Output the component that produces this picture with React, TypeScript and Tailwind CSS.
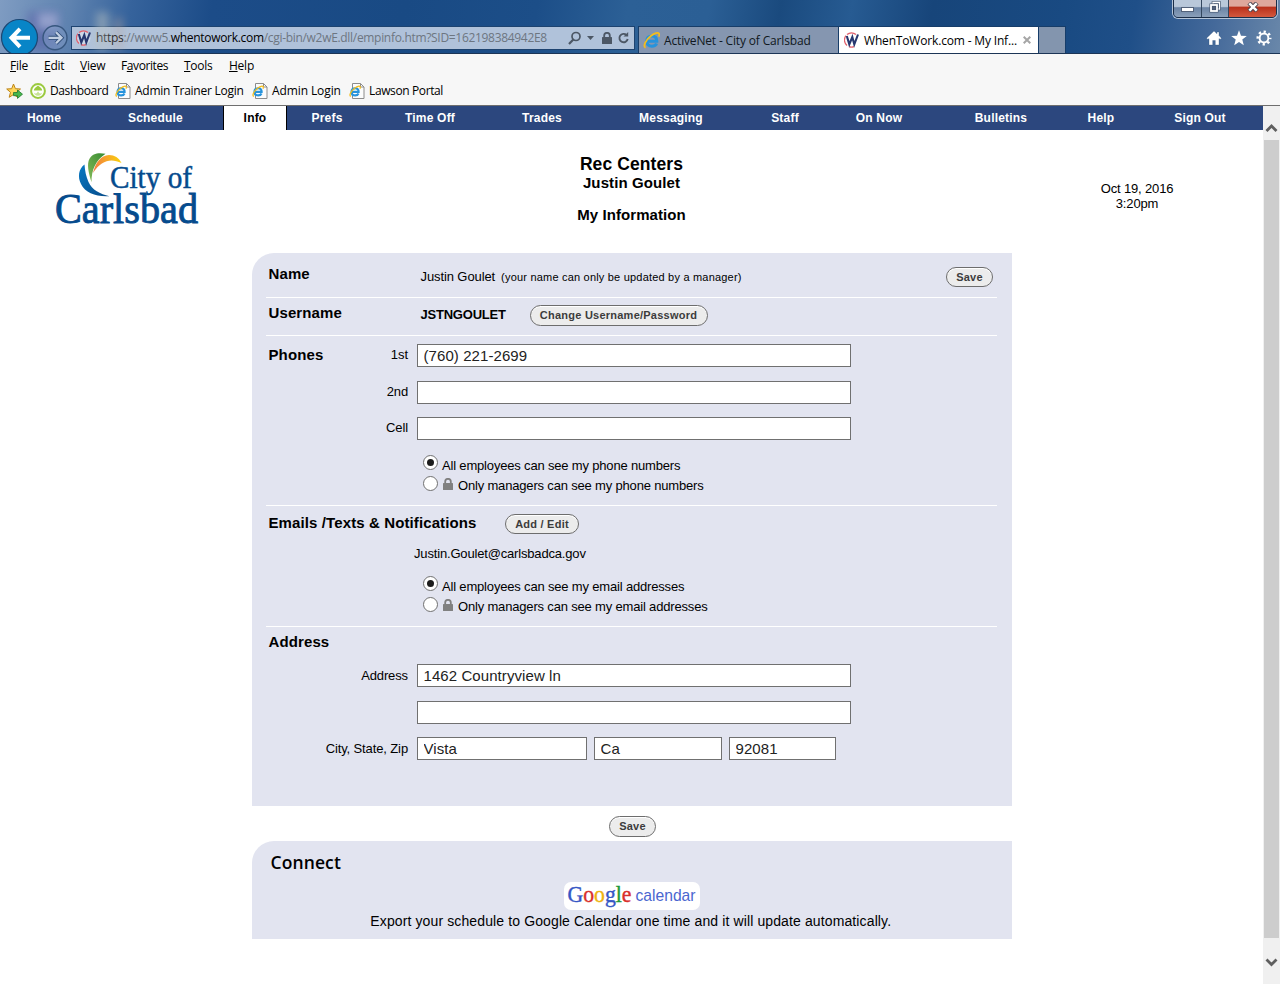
import React from 'react';

const UI = 'font-["Open_Sans","Noto_Sans",sans-serif]';

function WLogo() {
  return (
    <svg width="16" height="16" viewBox="0 0 16 16" className="shrink-0">
      <circle cx="7.500" cy="8" r="7" fill="#fff" fillOpacity=".35" />
      <path d="M12 2.600A7 7 0 003 2.600M2 3.700A7 7 0 003 13.500M5 14.600A7 7 0 0010 14.600" fill="none" stroke="#e2606c" strokeWidth="1.300" />
      <path d="M2.800 4l2.500 8.300L8.300 5l2 7.300L14 2.500" fill="none" stroke="#26376f" strokeWidth="2.100" />
    </svg>
  );
}

function IeGlyph() {
  return (
    <g fill="none">
      <path d="M3.400 8.700h9.600c.2-3.200-1.700-5-4.600-5-3 0-5 2.100-5 5 0 2.900 2 4.700 5 4.700 2.100 0 3.700-.9 4.400-2.600" stroke="#2793dc" strokeWidth="2.900" />
      <path d="M2.400 14.800C-.4 13.400 2.800 7.300 7.600 3.600 10.800 1.100 14.200.1 15.100 1.600c.4.700.2 1.700-.3 2.700" stroke="#f3bd1c" strokeWidth="1.700" />
    </g>
  );
}

function IeIcon() {
  return (
    <svg width="17" height="17" viewBox="0 0 16 16" className="shrink-0">
      <IeGlyph />
    </svg>
  );
}

function IePage() {
  return (
    <svg width="16" height="17" viewBox="0 0 16 17" className="shrink-0">
      <path d="M3.500 .5h8l3.500 3.500v11.500h-11.500z" fill="#fcfcfc" stroke="#8c8c8c" />
      <path d="M11.500 .5V4H15" fill="none" stroke="#8c8c8c" />
      <g transform="translate(0 2.500) scale(.74)">
        <IeGlyph />
      </g>
    </svg>
  );
}

function Lock({ className, width, height }: { className: string; width: number; height: number }) {
  return (
    <svg width={width} height={height} viewBox="0 0 10 12" className={className}>
      <path d="M2.200 6V3.600a2.800 2.800 0 015.600 0V6" fill="none" stroke="currentColor" strokeWidth="1.800" />
      <rect x="0" y="5" width="10" height="7" rx=".5" fill="currentColor" />
    </svg>
  );
}

function Chrome() {
  return (
    <header className="relative h-[53px] shrink-0 overflow-hidden bg-[linear-gradient(100deg,#7f9cc2_0px,#5f83b0_70px,#36639c_130px,#1c4c88_210px,#194a84_400px,#1c4e88_530px,#2c6096_620px,#2b5f95_700px,#1a4a7e_770px,#275b92_840px,#17457a_920px,#194a82_1050px,#1f4f88_1120px,#44699a_1200px,#6f8cac_1280px)]">
      <div className="absolute left-[28px] top-[12px] h-[38px] w-[30px] bg-[#5961a8] opacity-60 blur-[5px]" />
      <div className="absolute left-[38px] top-[13px] h-[16px] w-[20px] bg-[#c8d0ea] opacity-50 blur-[4px]" />
      <div className="absolute left-[96px] top-[12px] h-[38px] w-[13px] bg-[#b9c1c0] opacity-50 blur-[4px]" />
      <div className="absolute left-[114px] top-[18px] h-[32px] w-[9px] bg-[#b8a6a0] opacity-40 blur-[4px]" />

      <svg width="72" height="36" viewBox="0 0 72 36" className="absolute left-0 top-[17px]">
        <circle cx="19.500" cy="20.500" r="18" fill="#0885c7" stroke="#1d4773" strokeWidth="1.200" />
        <path d="M30 20.800H11.500M20 11.800l-8.500 9 8.500 9" fill="none" stroke="#fff" strokeWidth="4" />
        <circle cx="55" cy="20.800" r="12" fill="#7f9cc6" fillOpacity=".5" stroke="#37577f" strokeWidth="1.400" />
        <path d="M48.500 20.800H61M56 15.300l5.500 5.500-5.500 5.500" fill="none" stroke="#304f7a" strokeWidth="4" />
        <path d="M48.500 20.800H61M56 15.300l5.500 5.500-5.500 5.500" fill="none" stroke="#c0cee2" strokeWidth="2.300" />
      </svg>

      <div className="flex h-[53px] items-start pl-[71px] pt-[26px]">
        <div className={`flex h-[24px] w-[564px] items-center border border-[#1d4370] bg-[#b0c2da] pl-[4px] ${UI} text-[12px]`}>
          <WLogo />
          <span className="ml-[4px] w-[453px] shrink-0 whitespace-nowrap leading-6 tracking-[-0.31px] text-[#6d7681]">
            <span className="text-black">https</span>://www5.<span className="text-black">whentowork.com</span>/cgi-bin/w2wE.dll/empinfo.htm?SID=162198384942E8
          </span>
          <div className="ml-[18px] flex items-center text-[#4c5765]">
            <svg width="15" height="15" viewBox="0 0 15 15">
              <circle cx="9" cy="5.500" r="4" fill="none" stroke="currentColor" strokeWidth="1.700" />
              <path d="M6.300 8.500L2 13" stroke="currentColor" strokeWidth="2.200" />
            </svg>
            <svg width="7" height="4" viewBox="0 0 7 4" className="ml-[5px]"><path d="M0 0h7L3.500 4z" fill="currentColor" /></svg>
            <Lock width={10} height={12} className="ml-[8px]" />
            <svg width="13" height="14" viewBox="0 0 13 14" className="ml-[5px]">
              <path d="M9.500 4A4.200 4.200 0 1010.700 8" fill="none" stroke="currentColor" strokeWidth="1.900" />
              <path d="M6.500 5.500h4.700V1z" fill="currentColor" />
            </svg>
          </div>
        </div>
        <div className={`ml-[3px] flex h-[27px] w-[201px] items-center border-x border-t border-[#173d69] bg-[#8596b0] pl-[4px] ${UI} text-[12px] text-[#101820]`}>
          <IeIcon />
          <span className="ml-[4px] whitespace-nowrap pt-[2px] leading-5 tracking-[-0.16px]">ActiveNet - City of Carlsbad</span>
        </div>
        <div className={`flex h-[27px] w-[200px] items-center border-r border-t border-[#173d69] bg-white pl-[5px] ${UI} text-[12px] text-black`}>
          <WLogo />
          <span className="ml-[4px] w-[155px] shrink-0 whitespace-nowrap pt-[2px] leading-5 tracking-[-0.17px]">WhenToWork.com - My Inf...</span>
          <svg width="8" height="8" viewBox="0 0 8 8" className="ml-[4px]"><path d="M.7.7l6.600 6.600M7.300.7L.7 7.300" stroke="#a6a6a6" strokeWidth="2" /></svg>
        </div>
        <div className="h-[27px] w-[27px] border-r border-t border-[#173d69] bg-[#8395ae]" />
        <div className="ml-auto mr-[8px] mt-[4px] flex gap-[9px] text-white">
          <svg width="16" height="16" viewBox="0 0 16 16"><path d="M8 1L.5 8.200l1.500 1.300 1-.9V15h3.700v-4.500h2.600V15H13V8.600l1 .9 1.500-1.300L13 5.600V2h-2v1.800z" fill="currentColor" stroke="#274b77" strokeWidth=".3" /></svg>
          <svg width="16" height="16" viewBox="0 0 16 16"><path d="M8 .3l2 5.400 5.800.2-4.500 3.600 1.500 5.700L8 12l-4.800 3.200 1.500-5.700L.2 5.900 6 5.700z" fill="currentColor" /></svg>
          <svg width="16" height="16" viewBox="0 0 16 16">
            <circle cx="8" cy="8" r="4.400" fill="none" stroke="currentColor" strokeWidth="2" />
            <circle cx="8" cy="8" r="6.300" fill="none" stroke="currentColor" strokeWidth="2.400" strokeDasharray="2.300 2.648" strokeDashoffset="1.150" />
          </svg>
        </div>
      </div>

      <div className="absolute right-[3px] top-[-6px] flex h-[24px] w-[104px] overflow-hidden rounded-b-[5px] border border-[#1b2e48] shadow-[0_0_0_1px_#b4c4d8]">
        <div className="flex w-[28px] items-end justify-center border-r border-[#33475f] bg-[linear-gradient(#b9c8da_52%,#6b84a5_58%,#8ba0ba)] pb-[5px]">
          <div className="h-[5px] w-[13px] border border-[#53627a] bg-white" />
        </div>
        <div className="flex w-[27px] items-end justify-center border-r border-[#33475f] bg-[linear-gradient(#b9c8da_52%,#6b84a5_58%,#8ba0ba)] pb-[4px]">
          <svg width="12" height="12" viewBox="0 0 12 12">
            <path d="M4 3V1.500h6.500V8H9" fill="none" stroke="#43536c" strokeWidth="2.600" />
            <path d="M4 3V1.500h6.500V8H9" fill="none" stroke="#fff" strokeWidth="1.300" />
            <rect x="2" y="4" width="6" height="6" fill="#53627a" stroke="#43536c" strokeWidth="3" />
            <rect x="2" y="4" width="6" height="6" fill="none" stroke="#fff" strokeWidth="1.800" />
          </svg>
        </div>
        <div className="flex flex-1 items-end justify-center bg-[linear-gradient(#dea79c_50%,#b9311c_56%,#d4583d)] pb-[5px]">
          <svg width="12" height="10" viewBox="0 0 12 10">
            <path d="M2 1l8 8M10 1L2 9" stroke="#4b4550" strokeWidth="4.400" />
            <path d="M2.300 1.300l7.400 7.400M9.700 1.300L2.300 8.700" stroke="#fff" strokeWidth="2.500" />
          </svg>
        </div>
      </div>
    </header>
  );
}

function Menus() {
  return (
    <div className={`h-[53px] shrink-0 border-b border-t border-b-[#6e6e6e] border-t-[#1c3556] bg-[#f7f7f7] ${UI} text-[12px] text-black`}>
      <div className="flex h-[24px] items-center pl-[10px] leading-5 tracking-[-0.25px]">
        <span className="w-[34px]"><u>F</u>ile</span>
        <span className="w-[36px]"><u>E</u>dit</span>
        <span className="w-[41px]"><u>V</u>iew</span>
        <span className="w-[63px] tracking-[-0.4px]">F<u>a</u>vorites</span>
        <span className="w-[45px]"><u>T</u>ools</span>
        <span><u>H</u>elp</span>
      </div>
      <div className="flex h-[26px] items-center whitespace-nowrap pl-[6px] leading-5">
        <svg width="17" height="16" viewBox="0 0 17 16">
          <path d="M7.500 1l1.900 4.700 5.100.3-4 3.300 1.300 5-4.300-2.800-4.300 2.800 1.300-5L.7 6l5-.3z" fill="#ffd75c" stroke="#bd8418" />
          <path d="M7.500 9.500h4V7l5 4.200-5 4.200v-2.700h-4z" fill="#47b74d" stroke="#23782e" strokeWidth=".8" />
        </svg>
        <svg width="16" height="16" viewBox="0 0 16 16" className="ml-[7px]">
          <circle cx="8" cy="8" r="6.900" fill="#fff" stroke="#9bca3f" strokeWidth="2" />
          <path d="M8 2.500C6 4 4 5.500 3.800 7.500h8.400C12 5.500 10 4 8 2.500z" fill="#9bca3f" />
          <path d="M3.800 8.500a1.700 1.700 0 003.700.2h1a1.700 1.700 0 003.700-.2c0 2.500-1.700 4.300-4.200 4.300s-4.200-1.800-4.200-4.300z" fill="#9bca3f" fillOpacity=".55" />
        </svg>
        <span className="ml-[4px] w-[65px] tracking-[-0.55px]"><span className="tracking-[-0.4px]">Dashboard</span></span>
        <IePage />
        <span className="ml-[4px] w-[117px] tracking-[-0.24px]">Admin Trainer Login</span>
        <IePage />
        <span className="ml-[4px] w-[77px] tracking-[-0.1px]">Admin Login</span>
        <IePage />
        <span className="ml-[4px] tracking-[-0.38px]">Lawson Portal</span>
      </div>
    </div>
  );
}

const NAV: [string, string][] = [
  ['Home', 'w-[88px]'],
  ['Schedule', 'w-[135px]'],
  ['Info', 'w-[64px] bg-white text-black border-x border-black'],
  ['Prefs', 'w-[80px]'],
  ['Time Off', 'w-[126px]'],
  ['Trades', 'w-[98px]'],
  ['Messaging', 'w-[160px]'],
  ['Staff', 'w-[68px]'],
  ['On Now', 'w-[120px]'],
  ['Bulletins', 'w-[124px]'],
  ['Help', 'w-[76px]'],
  ['Sign Out', 'w-[122px]'],
];

function PillButton({ label, className }: { label: string; className: string }) {
  return (
    <button className={`flex shrink-0 items-center justify-center whitespace-nowrap rounded-full border border-[#6d6d6d] bg-[#ececec] text-[11px] font-bold leading-none tracking-[0.24px] text-[#3c3c3c] shadow-[inset_0_1px_0_#fff] ${className}`}>
      {label}
    </button>
  );
}

function Field({ value = '', label, className }: { value?: string; label: string; className: string }) {
  return (
    <input
      aria-label={label}
      defaultValue={value}
      className={`h-[23px] shrink-0 border border-[#707070] bg-white px-[5.500px] text-[15px] tracking-[0.08px] text-[#222] outline-none ${className}`}
    />
  );
}

function Visibility({ kind }: { kind: string }) {
  return (
    <div className="flex flex-col pl-[157px] text-[13px] leading-4">
      <div className="flex h-[21px] items-start">
        <RadioMark checked />
        <span className="ml-[4px] mt-[3px] whitespace-nowrap tracking-[-0.175px]">All employees can see my {kind}</span>
      </div>
      <div className="flex items-start">
        <RadioMark />
        <Lock width={10} height={12} className="ml-[5px] mt-[2px] text-[#808080]" />
        <span className="ml-[5px] mt-[2px] whitespace-nowrap tracking-[-0.175px]">Only managers can see my {kind}</span>
      </div>
    </div>
  );
}

function RadioMark({ checked = false }: { checked?: boolean }) {
  return (
    <span className="flex h-[15px] w-[15px] shrink-0 items-center justify-center rounded-full border border-[#707070] bg-white">
      {checked && <span className="h-[7px] w-[7px] rounded-full bg-[#1c1c1c]" />}
    </span>
  );
}

const H = 'text-[15px] font-bold leading-[18px] whitespace-nowrap tracking-[0.11px]';
const LABEL = 'mr-[9px] w-[142px] shrink-0 text-right text-[13px] leading-4 tracking-[-0.12px]';

function CityLogo() {
  return (
    <svg width="150" height="90" viewBox="0 0 150 90" className="shrink-0 overflow-visible">
      <defs>
        <linearGradient id="blue" x1="0" y1="0" x2="1" y2="1"><stop stopColor="#0879c3" /><stop offset="1" stopColor="#064a88" /></linearGradient>
        <linearGradient id="green" x1="0" y1="1" x2="1" y2="0"><stop stopColor="#86ba59" /><stop offset="1" stopColor="#348b31" /></linearGradient>
        <linearGradient id="gold"><stop stopColor="#f17d43" /><stop offset="1" stopColor="#fbd20b" /></linearGradient>
      </defs>
      <path d="M28.500 14.500C22.500 19 21.500 27 25 34c4.500 9 15 13 28.500 12.200C44 44 36 40 32.500 32 30 26.500 29 21 28.500 14.500z" fill="url(#blue)" />
      <path d="M49.500 3.800c-7-1.500-13-.5-16 5-2.800 5-1.200 13.500 2 23.500C35.500 20 39.500 10.500 49.500 3.800z" fill="url(#green)" />
      <path d="M37 23C39.500 12.500 45 5.200 53 5c5.500 0 10 2.700 12.500 8C55 8 45.500 10 37 23z" fill="url(#gold)" />
      <text x="54" y="37.500" fontFamily="Liberation Serif, serif" fontSize="32" textLength="82" lengthAdjust="spacingAndGlyphs" fill="#054b8d" stroke="#054b8d" strokeWidth=".5">City of</text>
      <text x="-1" y="73" fontFamily="Liberation Serif, serif" fontSize="42.500" textLength="143" lengthAdjust="spacingAndGlyphs" fill="#054b8d" stroke="#054b8d" strokeWidth=".9">Carlsbad</text>
    </svg>
  );
}

function InfoForm() {
  return (
    <form className="ml-[252px] flex h-[553px] w-[759.500px] flex-col rounded-tl-[22px] bg-[#e2e4f0] pl-[14px] pr-[14.500px]">
      <section className="flex h-[45px] items-start border-b border-white pl-[2.500px]">
        <h2 className={`mt-[12px] w-[152px] ${H}`}>Name</h2>
        <span className="mt-[16px] text-[13px] leading-4 tracking-[-0.1px]">Justin Goulet</span>
        <span className="ml-[6px] mt-[17px] text-[11px] leading-[15px] tracking-[0.2px]">(your name can only be updated by a manager)</span>
        <PillButton label="Save" className="ml-auto mr-[4px] mt-[14px] h-[20px] w-[47px]" />
      </section>

      <section className="flex h-[38px] items-start border-b border-white pl-[2.500px]">
        <h2 className={`mt-[6px] w-[152px] ${H}`}>Username</h2>
        <span className="mt-[9px] w-[109px] text-[13px] font-bold leading-4 tracking-[-0.22px]">JSTNGOULET</span>
        <PillButton label="Change Username/Password" className="mt-[7px] h-[21px] w-[178px]" />
      </section>

      <section className="h-[170px] border-b border-white pt-[8px]">
        <div className="flex h-[37px] items-start">
          <h2 className={`ml-[2.500px] mt-[2px] w-[97.500px] ${H}`}>Phones</h2>
          <span className="mr-[9px] mt-[3px] w-[42px] text-right text-[13px] leading-4">1st</span>
          <Field label="First phone" value="(760) 221-2699" className="w-[434px]" />
        </div>
        <div className="flex h-[36px] items-start">
          <span className={`mt-[3px] ${LABEL}`}>2nd</span>
          <Field label="Second phone" className="w-[434px]" />
        </div>
        <div className="flex h-[38px] items-start">
          <span className={`mt-[3px] ${LABEL}`}>Cell</span>
          <Field label="Cell phone" className="w-[434px]" />
        </div>
        <Visibility kind="phone numbers" />
      </section>

      <section className="h-[121px] border-b border-white">
        <div className="flex h-[40px] items-start pl-[2.500px] pt-[8px]">
          <h2 className={`w-[236.500px] ${H}`}>Emails /Texts &amp; Notifications</h2>
          <PillButton label="Add / Edit" className="h-[20px] w-[74px]" />
        </div>
        <p className="h-[30px] pl-[148px] text-[13px] leading-4 tracking-[-0.17px]">Justin.Goulet@carlsbadca.gov</p>
        <Visibility kind="email addresses" />
      </section>

      <section className="pt-[6px]">
        <h2 className={`ml-[2.500px] h-[31px] ${H}`}>Address</h2>
        <div className="flex h-[37px] items-start">
          <span className={`mt-[4px] ${LABEL}`}>Address</span>
          <Field label="Address line 1" value="1462 Countryview ln" className="w-[434px]" />
        </div>
        <div className="flex h-[36px] items-start pl-[151px]">
          <Field label="Address line 2" className="w-[434px]" />
        </div>
        <div className="flex items-start">
          <span className={`mt-[4px] ${LABEL}`}>City, State, Zip</span>
          <Field label="City" value="Vista" className="w-[170px]" />
          <Field label="State" value="Ca" className="ml-[7px] w-[128px]" />
          <Field label="Zip" value="92081" className="ml-[7px] w-[107px]" />
        </div>
      </section>
    </form>
  );
}

export default function App() {
  return (
    <div className='flex h-[984px] w-[1280px] flex-col overflow-hidden bg-white font-["Liberation_Sans",Arial,sans-serif] text-black'>
      <Chrome />
      <Menus />
      <div className="flex min-h-0 flex-1">
        <main className="w-[1263px]">
          <nav className="flex h-[24px] bg-[#2c477e] text-[12px] font-bold tracking-[0.2px] text-white">
            {NAV.map(([name, cls]) => (
              <a key={name} className={`flex items-center justify-center whitespace-nowrap ${cls}`}>{name}</a>
            ))}
          </nav>

          <div className="flex h-[123px] items-start">
            <div className="w-[431px] pl-[56px] pt-[20px]"><CityLogo /></div>
            <div className="flex w-[401px] flex-col items-center pt-[24px] font-bold">
              <h1 className="text-[17.500px] leading-[20px] tracking-[0.1px]">Rec Centers</h1>
              <p className="text-[15px] leading-[18px] tracking-[0.1px]">Justin Goulet</p>
              <p className="mt-[14px] text-[15px] leading-[18px] tracking-[0.08px]">My Information</p>
            </div>
            <div className="ml-[204px] w-[202px] pt-[51px] text-center text-[13px] leading-[15px] tracking-[-0.15px]">
              Oct 19, 2016<br />3:20pm
            </div>
          </div>

          <InfoForm />

          <div className="ml-[609px] flex h-[35px] items-start pt-[10px]">
            <PillButton label="Save" className="h-[21px] w-[47px]" />
          </div>

          <section className="ml-[252px] flex h-[98px] w-[759.500px] flex-col items-center rounded-tl-[22px] bg-[#e2e4f0]">
            <h2 className={`h-[41px] w-full pl-[18.500px] pt-[9px] ${UI} text-[17.500px] font-semibold leading-[24px] tracking-[0.1px]`}>Connect</h2>
            <div className="flex h-[28px] w-[136px] items-center justify-center rounded-[7px] bg-white">
              <svg width="136" height="28" viewBox="0 0 136 28" className="overflow-visible">
                <text x="3.500" y="20" fontFamily="Liberation Serif, serif" fontSize="23" textLength="64" lengthAdjust="spacingAndGlyphs" strokeWidth=".4">
                  <tspan fill="#3556c5" stroke="#3556c5">G</tspan><tspan fill="#d9302c" stroke="#d9302c">o</tspan><tspan fill="#eeb211" stroke="#eeb211">o</tspan><tspan fill="#3556c5" stroke="#3556c5">g</tspan><tspan fill="#1b9a37" stroke="#1b9a37">l</tspan><tspan fill="#d9302c" stroke="#d9302c">e</tspan>
                </text>
                <text x="71.500" y="19" fontFamily="Liberation Sans, sans-serif" fontSize="17" textLength="60" lengthAdjust="spacingAndGlyphs" fill="#4a66d0">calendar</text>
              </svg>
            </div>
            <p className="mr-[2px] mt-[2px] whitespace-nowrap text-[14px] leading-[18px] tracking-[0.12px]">Export your schedule to Google Calendar one time and it will update automatically.</p>
          </section>
        </main>

        <aside className="flex w-[17px] flex-col items-center bg-[#f0f0f0]">
          <svg width="17" height="34" viewBox="0 0 17 34"><path d="M3.500 25l5-5 5 5" fill="none" stroke="#5f5f5f" strokeWidth="2.800" /></svg>
          <div className="h-[798px] w-[15px] bg-[#cdcdcd]" />
          <svg width="17" height="46" viewBox="0 0 17 46"><path d="M3.500 21.500l5 5 5-5" fill="none" stroke="#5f5f5f" strokeWidth="2.800" /></svg>
        </aside>
      </div>
    </div>
  );
}
